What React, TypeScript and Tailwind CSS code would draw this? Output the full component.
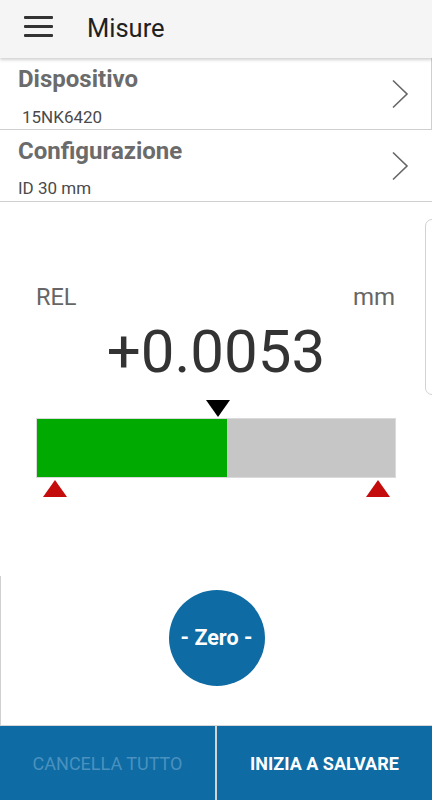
import React from "react";

export default function App() {
  return (
    <div className="w-[432px] h-[800px] bg-white flex flex-col relative overflow-hidden font-['Roboto',sans-serif]">
      {/* Header */}
      <div className="h-[58px] bg-[#f5f5f5] flex items-center relative z-10 shadow-[0_2px_3px_rgba(0,0,0,0.18)] shrink-0">
        <div className="ml-[24px] mb-[5px] w-[29px] flex flex-col gap-[5.5px]">
          <div className="h-[3.5px] bg-[#333] rounded-[1px]" />
          <div className="h-[3.5px] bg-[#333] rounded-[1px]" />
          <div className="h-[3.5px] bg-[#333] rounded-[1px]" />
        </div>
        <div className="ml-[34px] text-[25.5px] leading-none text-[#212121]">Misure</div>
      </div>

      {/* Row 1 */}
      <div className="h-[72px] border-b border-r border-[#cfcfcf] flex items-center justify-between shrink-0">
        <div className="pl-[18px] self-start pt-[9px]">
          <div className="text-[24px] leading-[24px] font-bold text-[#6b6b6b]">Dispositivo</div>
          <div className="mt-[18px] pl-[4px] text-[17px] leading-[17px] text-[#4a4a4a]">15NK6420</div>
        </div>
        <Chevron />
      </div>

      {/* Row 2 */}
      <div className="h-[72px] border-b border-[#cfcfcf] flex items-center justify-between shrink-0">
        <div className="pl-[18px] self-start pt-[9px]">
          <div className="text-[24px] leading-[24px] font-bold text-[#6b6b6b]">Configurazione</div>
          <div className="mt-[17px] text-[17px] leading-[17px] text-[#4a4a4a]">ID 30 mm</div>
        </div>
        <div className="mr-[1px]">
          <Chevron />
        </div>
      </div>

      {/* Main */}
      <div className="flex-1 flex flex-col relative">
        <div className="absolute left-[425px] top-[17px] w-[16px] h-[176px] border border-[#d2d2d2] rounded-[7px] bg-white" />

        <div className="mt-[84px] px-[36px] flex justify-between items-baseline pr-[37px] text-[#666]">
          <span className="text-[23.5px] leading-[22px]">REL</span>
          <span className="text-[24px] leading-[22px]">mm</span>
        </div>

        <div className="mt-[14px] text-center text-[60px] leading-[60px] text-[#333]">+0.0053</div>

        <div className="mt-[18px] ml-[36px] w-[360px] flex flex-col">
          <div className="h-[18px] pl-[170px]">
            <svg width="24" height="18" viewBox="0 0 24 18">
              <polygon points="0,0 24,0 12,17" fill="#000" />
            </svg>
          </div>
          <div className="h-[60px] border border-[#dadada] bg-[#c6c6c6] flex">
            <div className="w-[190px] bg-[#00aa00]" />
          </div>
          <div className="mt-[2px] h-[17px] flex justify-between pl-[7px] pr-[6px]">
            <svg width="24" height="17" viewBox="0 0 24 17">
              <polygon points="12,0 24,17 0,17" fill="#c40c0c" />
            </svg>
            <svg width="24" height="17" viewBox="0 0 24 17">
              <polygon points="12,0 24,17 0,17" fill="#c40c0c" />
            </svg>
          </div>
        </div>

        <div className="mt-[79px] flex-1 border-l border-[#d0d0d0] flex flex-col items-center">
          <button className="mt-[14px] w-[96px] h-[96px] rounded-full bg-[#0e6ba3] text-white font-bold text-[21.5px] leading-none flex items-center justify-center">
            - Zero -
          </button>
        </div>
      </div>

      {/* Bottom bar */}
      <div className="h-[75px] border-t border-[#d6d6d6] bg-[#0e6ba3] flex shrink-0">
        <div className="w-[215px] flex items-center justify-center text-[18px] text-[#4a91bf]">CANCELLA TUTTO</div>
        <div className="w-[2px] bg-[#d4d4d4]" />
        <div className="flex-1 flex items-center justify-center text-[18px] font-bold text-white">INIZIA A SALVARE</div>
      </div>
    </div>
  );
}

function Chevron() {
  return (
    <svg width="20" height="30" viewBox="0 0 20 30" className="mr-[20px]">
      <polyline points="2,1.5 16,15 2,28.5" fill="none" stroke="#666" strokeWidth="1.6" />
    </svg>
  );
}
